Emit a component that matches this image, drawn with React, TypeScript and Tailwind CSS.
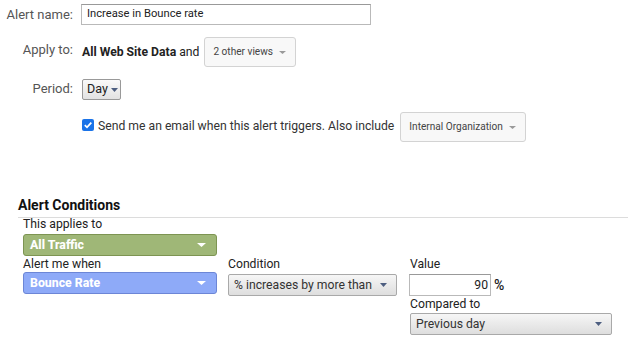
import * as React from 'react';

/** Small solid down-pointing triangle used in every select. */
function Caret({ color, w = 8, h = 4 }: { color: string; w?: number; h?: number }) {
  return (
    <svg width={w} height={h} viewBox={`0 0 ${w} ${h}`} className="shrink-0">
      <polygon points={`0,0 ${w},0 ${w / 2},${h}`} fill={color} />
    </svg>
  );
}

/** Light, flat pill select (Apply to / Also include). */
function FlatSelect({ label, className }: { label: string; className: string }) {
  return (
    <div
      className={`flex items-center justify-between rounded-[3px] border border-[#d3d3d3] bg-[#f8f8f8] pl-[8px] pr-[9px] text-[10.1px] text-[#444] ${className}`}
    >
      <span>{label}</span>
      <Caret color="#9a9a9a" w={7} h={3} />
    </div>
  );
}

/** Grey gradient select (Condition / Compared to). */
function GreySelect({ label, className }: { label: string; className: string }) {
  return (
    <div
      className={`flex h-[22px] items-center justify-between whitespace-nowrap rounded-[2px] border border-[#a9a9a9] bg-gradient-to-b from-[#f6f6f6] to-[#dedede] pl-[5px] pr-[9px] text-[12.2px] text-[#333] ${className}`}
    >
      <span>{label}</span>
      <Caret color="#4d5e80" w={7} h={4} />
    </div>
  );
}

/** Coloured segment / metric picker. */
function ColorSelect({ label, className }: { label: string; className: string }) {
  return (
    <div
      className={`flex h-[22px] w-[194px] items-center justify-between rounded-[3px] border pl-[6px] pr-[10px] text-[12.3px] font-extrabold text-white ${className}`}
    >
      <span>{label}</span>
      <Caret color="#ffffff" w={9} h={4} />
    </div>
  );
}

export default function App() {
  return (
    <div className="h-[346px] w-[628px] overflow-hidden bg-white pt-[4px] font-['Roboto',sans-serif] text-[12.2px] text-[#222]">
      {/* Alert settings */}
      <div className="flex h-[21px] items-center">
        <span className="w-[73px] text-right text-[13px] text-[#555]">Alert name:</span>
        <div className="ml-[8px] flex h-[21px] w-[290px] items-center border border-[#b9b9b9] border-t-[#999] px-[5px] text-[11.2px] text-[#222]">
          Increase in Bounce rate
        </div>
      </div>

      <div className="mt-[12px] flex h-[30px] items-center">
        <span className="mb-[4px] w-[73px] text-right text-[13px] text-[#555]">Apply to:</span>
        <span className="ml-[9px]">
          <b className="font-bold">All Web Site Data</b> and
        </span>
        <FlatSelect label="2 other views" className="ml-[5px] h-[30px] w-[92px]" />
      </div>

      <div className="mt-[12px] flex h-[21px] items-center">
        <span className="mb-[2px] w-[73px] text-right text-[13px] text-[#555]">Period:</span>
        <div className="ml-[9px] flex h-[21px] w-[39px] items-center gap-[3px] rounded-[2px] border border-[#999] bg-gradient-to-b from-[#fafafa] to-[#e2e2e2] pl-[4px] text-[12.5px] text-[#222]">
          Day
          <Caret color="#4d5e80" w={7} h={4} />
        </div>
      </div>

      <div className="mt-[12px] flex h-[30px] items-center pl-[82px]">
        <span className="mb-[4px] flex h-[12px] w-[12px] items-center justify-center rounded-[2px] bg-[#1a73e8]">
          <svg width="10" height="10" viewBox="0 0 10 10">
            <path d="M1.8 5.2 L4 7.3 L8.3 2.6" fill="none" stroke="white" strokeWidth="1.8" />
          </svg>
        </span>
        <span className="mb-[2px] ml-[4px] text-[#333]">
          Send me an email when this alert triggers. Also include
        </span>
        <FlatSelect label="Internal Organization" className="ml-[6px] h-[30px] w-[126px]" />
      </div>

      {/* Alert conditions */}
      <div className="ml-[18px] mt-[53px] border-b border-[#dcdcdc] pb-[2px]">
        <h2 className="text-[14px] font-bold leading-[20px] text-[#111]">Alert Conditions</h2>
      </div>

      <div className="pl-[23px]">
        <div className="leading-[13px] text-[#222]">This applies to</div>
        <ColorSelect
          label="All Traffic"
          className="mt-[3px] border-[#7d9452] bg-[#9fb777]"
        />

        <div className="flex">
          <div className="flex flex-col">
            <div className="leading-[16px]">Alert me when</div>
            <ColorSelect
              label="Bounce Rate"
              className="border-[#6c86d6] bg-[#8eaaf8]"
            />
          </div>

          <div className="ml-[11px] flex flex-col">
            <div className="leading-[16px]">Condition</div>
            <GreySelect label="% increases by more than" className="mt-[2px] w-[169px]" />
          </div>

          <div className="ml-[12px] flex flex-col">
            <div className="pl-[1px] leading-[16px]">Value</div>
            <div className="mt-[2px] flex items-center">
              <div className="flex h-[22px] w-[82px] items-center justify-end border border-[#b9b9b9] border-t-[#999] pr-[2px] text-[12.2px] text-[#222]">
                90
              </div>
              <span className="ml-[3px] text-[14px] font-medium text-[#222]">%</span>
            </div>
            <div className="pl-[1px] leading-[16px]">Compared to</div>
            <GreySelect label="Previous day" className="ml-[1px] mt-[1px] w-[202px]" />
          </div>
        </div>
      </div>
    </div>
  );
}
